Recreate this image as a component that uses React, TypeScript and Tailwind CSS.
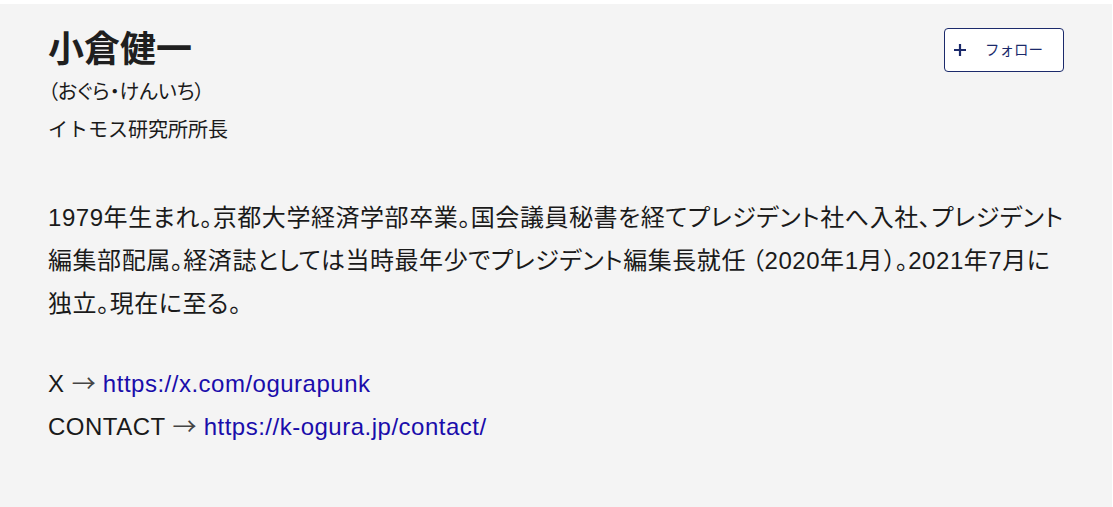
import React from "react";

export default function App() {
  return (
    <div className="min-h-[507px] bg-white pt-[4px] pr-px">
      <div className="min-h-[503px] bg-[#f4f4f4] px-[48px] pt-[20px] pb-[40px] text-[#1a1a1a] font-['Liberation_Sans','Noto_Sans_CJK_JP',sans-serif] tracking-[0.02em]">
        <div className="flex items-start justify-between">
          <div className="flex flex-col">
            <h1 className="text-[36px] font-bold leading-[51px] tracking-normal text-[#1f1f1f]">小倉健一</h1>
            <p className="mt-[2px] text-[20px] leading-[30px] tracking-normal [font-feature-settings:'palt']">（おぐら・けんいち）</p>
            <p className="mt-[7px] text-[20px] leading-[32px] tracking-normal">イトモス研究所所長</p>
          </div>
          <button className="mt-[4px] flex h-[44px] w-[120px] items-center rounded-[4px] border border-[#1b2a6b] bg-white pl-[7px] text-[#1b2a6b]">
            <svg width="14" height="14" viewBox="0 0 14 14" className="ml-[1px]">
              <path d="M7 1v12M1 7h12" stroke="#1b2a6b" strokeWidth="2.2" />
            </svg>
            <span className="ml-[18px] text-[14.5px] leading-none tracking-normal">フォロー</span>
          </button>
        </div>
        <p className="mt-[50px] text-[24px] leading-[43px] tracking-[0.55px] [font-feature-settings:'palt']">
          {"1979年生まれ。京都大学経済学部卒業。国会議員秘書を経てプレジデント社へ入社、プレジデント編集部配属。経済誌としては当時最年少でプレジデント編集長就任"}<span className="ml-[6px]">（</span>{"2020年1月"}<span className="[font-feature-settings:normal]">）</span>{"。2021年7月に独立。現在に至る。"}
        </p>
        <div className="mt-[37px] text-[24px] leading-[43px] tracking-[0.5px]">
          <p>
            X{" "}
            <span className="font-['Noto_Sans_CJK_JP',sans-serif] leading-none text-[#444] tracking-normal">→</span>{" "}
            <a href="#" className="text-[#1a0dab]">https://x.com/ogurapunk</a>
          </p>
          <p>
            CONTACT{" "}
            <span className="font-['Noto_Sans_CJK_JP',sans-serif] leading-none text-[#444] tracking-normal">→</span>{" "}
            <a href="#" className="text-[#1a0dab]">https://k-ogura.jp/contact/</a>
          </p>
        </div>
      </div>
    </div>
  );
}
